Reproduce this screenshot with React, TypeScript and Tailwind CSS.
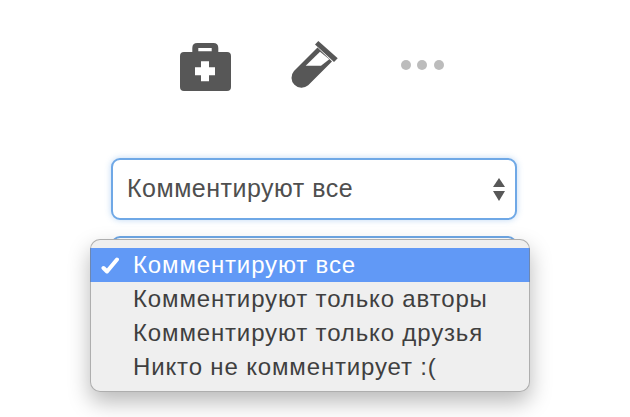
const font = { fontFamily: '"Liberation Sans", Arial, sans-serif' };

function MedKit() {
  return (
    <svg width="51" height="48" viewBox="0 0 51 48" fill="#575757">
      <path fillRule="evenodd" d="M12.300 9V5q0-5 5-5h16q5 0 5 5v4H47q4 0 4 4v31q0 4-4 4H4q-4 0-4-4V13q0-4 4-4zm6-4v3.300h13.400V5z" />
      <path fill="#fff" d="M21 18.300h8v6h6v8h-6v6h-8v-6h-6v-8h6z" />
    </svg>
  );
}

function TestTube() {
  return (
    <svg width="49" height="48" viewBox="0 0 49 48" fill="#575757" className="overflow-visible">
      <path d="M28.500 5.500 5 29A10.100 10.100 0 0 0 19.200 43.300L43 19.500z" />
      <path d="M29.300-1 48.700 16.300 45 20 26 2.500z" />
      <path fill="#fff" d="M16.700 23.700 31 9.700 40.300 17.300 32 23.700z" />
    </svg>
  );
}

function Arrows() {
  return (
    <svg width="12" height="23" viewBox="0 0 12 23" fill="#585858">
      <path d="M6 0 12 9H0z" />
      <path d="M0 13H12L6 23z" />
    </svg>
  );
}

function CheckMark() {
  return (
    <svg width="18" height="18" viewBox="0 0 18 18" fill="none" stroke="#fff" strokeWidth="4" strokeLinecap="round" strokeLinejoin="round">
      <path d="M2.500 12 6 15.500 16 3.500" />
    </svg>
  );
}

const options = ['Комментируют только авторы', 'Комментируют только друзья', 'Никто не комментирует :('];

export default function App() {
  return (
    <div className="relative h-[417px] w-[630px] overflow-hidden bg-white" style={font}>
      <div className="flex h-[158px] items-start pl-[180px] pt-[43px]">
        <MedKit />
        <div className="ml-[58px] mt-[-1px]"><TestTube /></div>
        <div className="ml-[63px] mt-[17px] flex gap-[6.300px]">
          <span className="h-[10px] w-[10px] rounded-full bg-[#bcbcbc]" />
          <span className="h-[10px] w-[10px] rounded-full bg-[#bcbcbc]" />
          <span className="h-[10px] w-[10px] rounded-full bg-[#bcbcbc]" />
        </div>
      </div>

      <div className="ml-[111px] flex h-[62px] w-[406px] items-center justify-between rounded-[9px] border-2 border-[#6fa8e6] bg-white pl-[14px] pr-[10px] text-[25px] tracking-[0.5px] text-[#4f4f4f] shadow-[0_0_6px_rgba(111,168,230,0.45)]">
        <span>Комментируют все</span>
        <Arrows />
      </div>
      <div className="ml-[111px] mt-[16px] h-[62px] w-[406px] rounded-[9px] border-2 border-[#6fa8e6] bg-white" />

      <div className="absolute left-[90px] top-[239px] h-[153px] w-[440px] overflow-hidden rounded-[10px] bg-[#efefef] pt-[9px] text-[24px] tracking-[0.85px] text-[#3f3f3f]">
        <div className="flex h-[34px] items-center bg-[#6199f6] text-white">
          <span className="flex w-[43px] justify-start pl-[11px]"><CheckMark /></span>
          <span>Комментируют все</span>
        </div>
        {options.map((label) => (
          <div key={label} className="flex h-[34px] items-center pl-[43px]">{label}</div>
        ))}
      </div>
      <div className="pointer-events-none absolute left-[90px] top-[239px] h-[153px] w-[440px] rounded-[10px] shadow-[inset_0_0_0_1px_rgba(120,120,120,0.55),0_10px_22px_rgba(0,0,0,0.28)]" />
    </div>
  );
}
